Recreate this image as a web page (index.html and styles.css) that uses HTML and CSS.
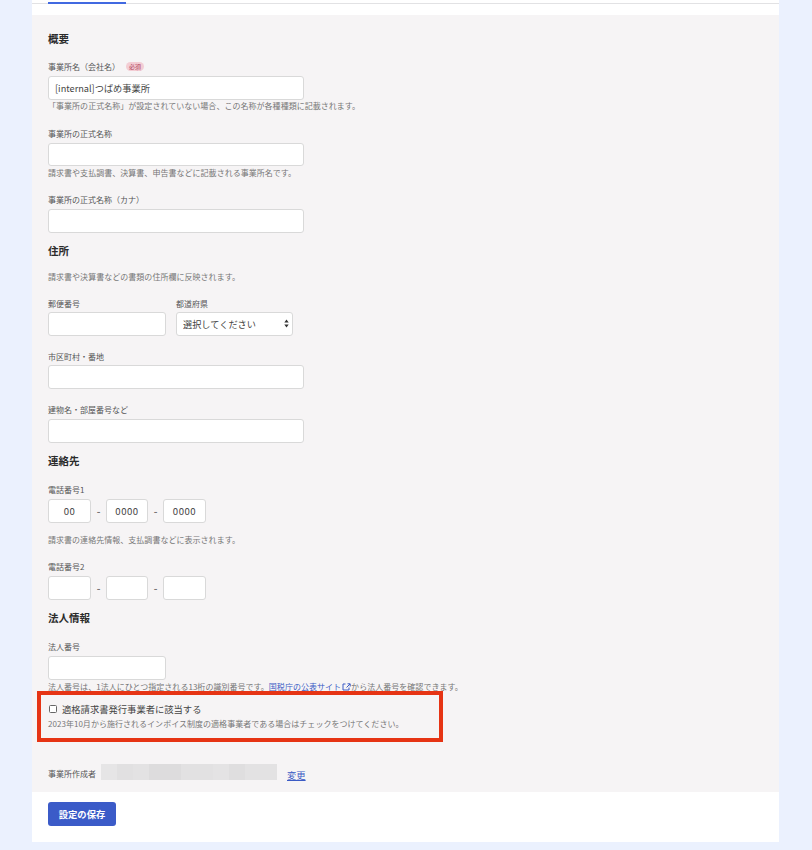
FILE: index.html
```html
<!DOCTYPE html>
<html lang="ja">
<head>
<meta charset="utf-8">
<title>事業所の設定</title>
<link rel="stylesheet" href="styles.css">
</head>
<body>
<main class="card">
  <div class="tabbar"><div class="tab"></div></div>
  <form class="panel">
    <h2 class="heading">概要</h2>
    <div class="field f1">
      <div class="label-row"><label class="label">事業所名（会社名）</label><span class="badge">必須</span></div>
      <input class="input wide i-a" type="text" value="[internal]つばめ事業所">
      <p class="help h-a">「事業所の正式名称」が設定されていない場合、この名称が各種種類に記載されます。</p>
    </div>
    <div class="field f2">
      <label class="label">事業所の正式名称</label>
      <input class="input wide i-b" type="text">
      <p class="help h-b">請求書や支払調書、決算書、申告書などに記載される事業所名です。</p>
    </div>
    <div class="field f3">
      <label class="label">事業所の正式名称（カナ）</label>
      <input class="input wide i-a" type="text">
    </div>

    <h2 class="heading sub">住所</h2>
    <p class="help h-c">請求書や決算書などの書類の住所欄に反映されます。</p>
    <div class="row f3">
      <div class="col">
        <label class="label">郵便番号</label>
        <input class="input mid i-c" type="text">
      </div>
      <div class="col">
        <label class="label">都道府県</label>
        <div class="select-wrap i-c">
          <select class="select"><option>選択してください</option></select>
          <svg class="select-arrows" width="5" height="9" viewBox="0 0 5 9"><path d="M2.5 0.5 L4.7 3.5 H0.3 Z M2.5 8.5 L0.3 5.5 H4.7 Z" fill="#333"/></svg>
        </div>
      </div>
    </div>
    <div class="field f4">
      <label class="label">市区町村・番地</label>
      <input class="input wide i-c" type="text">
    </div>
    <div class="field f4">
      <label class="label">建物名・部屋番号など</label>
      <input class="input wide i-a" type="text">
    </div>

    <h2 class="heading sub">連絡先</h2>
    <div class="field f3">
      <label class="label">電話番号1</label>
      <div class="phone i-a">
        <input class="input tel" type="text" value="00"><span class="dash">-</span>
        <input class="input tel mid-tel" type="text" value="0000"><span class="dash">-</span>
        <input class="input tel" type="text" value="0000">
      </div>
      <p class="help h-d">請求書の連絡先情報、支払調書などに表示されます。</p>
    </div>
    <div class="field f3">
      <label class="label">電話番号2</label>
      <div class="phone i-a">
        <input class="input tel" type="text"><span class="dash">-</span>
        <input class="input tel mid-tel" type="text"><span class="dash">-</span>
        <input class="input tel" type="text">
      </div>
    </div>

    <h2 class="heading sub">法人情報</h2>
    <div class="field f3">
      <label class="label">法人番号</label>
      <input class="input mid i-a" type="text">
      <p class="help h-e">法人番号は、1法人にひとつ指定される13桁の識別番号です。<a class="link" href="#">国税庁の公表サイト<svg class="ext" width="9" height="8" viewBox="0 0 9 8"><path d="M3.5 1H1v6h6V4.5M4.5 4.5 8 1M5.5 .8h2.7v2.7" fill="none" stroke="#3b5bc5" stroke-width="1"/></svg></a>から法人番号を確認できます。</p>
    </div>
    <div class="invoice">
      <label class="check-row"><input class="check" type="checkbox"><span>適格請求書発行事業者に該当する</span></label>
      <p class="help h-f">2023年10月から施行されるインボイス制度の適格事業者である場合はチェックをつけてください。</p>
      <div class="highlight"></div>
    </div>
    <div class="creator">
      <span class="label creator-label">事業所作成者</span>
      <span class="mosaic"></span>
      <a class="change" href="#">変更</a>
    </div>
  </form>
  <footer class="footer"><button class="save" type="button">設定の保存</button></footer>
</main>
</body>
</html>
```
FILE: styles.css
```css
* { box-sizing: border-box; }
html, body { margin: 0; height: 850px; overflow: hidden; }
body {
  background: #ebf1fe;
  font-family: "Noto Sans CJK JP", "Noto Sans", sans-serif;
  color: #333;
}
.card { margin-left: 32px; width: 747px; height: 842px; background: #fff; display: flex; flex-direction: column; }
.tabbar { height: 4px; margin-bottom: 11px; border-bottom: 1px solid #e2e2e4; padding: 2px 0 0 16px; flex: none; }
.tab { width: 78px; height: 2px; background: #4169e1; }
.panel { background: #f6f4f5; padding: 16px 16px 12px; flex: none; height: 777px; }
.heading { margin: 0; font-size: 10.5px; line-height: 16px; font-weight: 700; color: #2b2b2b; }
.heading.sub { margin-top: 10.3px; }
.label { display: block; font-size: 8px; line-height: 12px; color: #555; font-weight: 400; }
.label-row { display: flex; align-items: center; height: 12px; }
.badge { margin-left: 6px; width: 18px; height: 9px; border-radius: 5px; background: #f3cdd4; color: #b0405a; font-size: 6px; line-height: 9px; text-align: center; margin-top: -2px; }
.field.f1 { margin-top: 14px; }
.field.f2 { margin-top: 16px; }
.f3 { margin-top: 15px; }
.f4 { margin-top: 15.3px; }
.input {
  display: block; height: 23.4px; padding: 0 6px; border: 1px solid #d9d9d9; border-radius: 3px;
  background: #fff; font-family: inherit; font-size: 9.2px; color: #444; outline: none;
}
.wide { width: 256px; }
.mid { width: 118px; }
.i-a { margin-top: 3.3px; }
.i-b { margin-top: 2.6px; }
.i-c { margin-top: 2.3px; }
.help { margin: 0; font-size: 8px; line-height: 12px; letter-spacing: .03px; color: #777; white-space: nowrap; }
.h-a { margin-top: .3px; }
.h-b { margin-top: 1px; }
.h-c { margin-top: 12px; }
.h-d { margin-top: 11.3px; }
.h-e { margin-top: 1.3px; }
.h-f { margin-top: 2px; }
.row { display: flex; gap: 10px; }
.select-wrap { position: relative; width: 117px; height: 23.4px; }
.select {
  display: block; appearance: none; width: 100%; height: 100%; padding: 0 6px; border: 1px solid #d9d9d9; border-radius: 3px;
  background: #fff; font-family: inherit; font-size: 9.2px; color: #444; outline: none;
}
.select-arrows { position: absolute; right: 4px; top: 7px; }
.phone { display: flex; align-items: center; }
.tel { width: 43px; padding: 0; text-align: center; font-size: 9.6px; letter-spacing: .5px; }
.mid-tel { width: 42px; }
.dash { width: 15px; text-align: center; font-size: 10px; font-weight: 700; color: #777; }
.link { color: #3b5bc5; text-decoration: none; }
.ext { vertical-align: -1px; margin-left: 1px; }
.invoice { position: relative; margin-top: 9px; }
.check-row { display: flex; align-items: center; height: 14px; font-size: 9.3px; color: #444; }
.check { width: 8px; height: 8px; margin: 0 5.5px 0 .5px; appearance: none; background: #fff; border: 1px solid #666; border-radius: 1.5px; }
.highlight { position: absolute; left: -10.7px; top: -11.3px; width: 405.4px; height: 51.3px; border: 4px solid #e63414; pointer-events: none; }
.creator { display: flex; align-items: flex-end; height: 16px; margin-top: 34px; }
.creator-label { width: 53px; flex: none; }
.mosaic {
  width: 176px; height: 16px; flex: none;
  background: linear-gradient(90deg, #e6e5e6 0 16px, #e1e0e1 16px 32px, #e3e2e3 32px 48px, #dddcdd 48px 80px, #e2e1e2 80px 112px, #e4e3e4 112px 128px, #dfdedf 128px 144px, #e3e2e3 144px 176px);
}
.change { margin: 0 0 -1px 10px; font-size: 9.3px; line-height: 12px; color: #3b5bc5; text-decoration: underline; }
.footer { height: 50px; padding: 10px 16px 0; background: #fff; flex: none; }
.save {
  display: block; width: 68px; height: 24px; border: 0; border-radius: 3px; padding: 0;
  background: #3b5bc8; color: #fff; font-family: inherit; font-size: 9.3px; font-weight: 700;
}
```
